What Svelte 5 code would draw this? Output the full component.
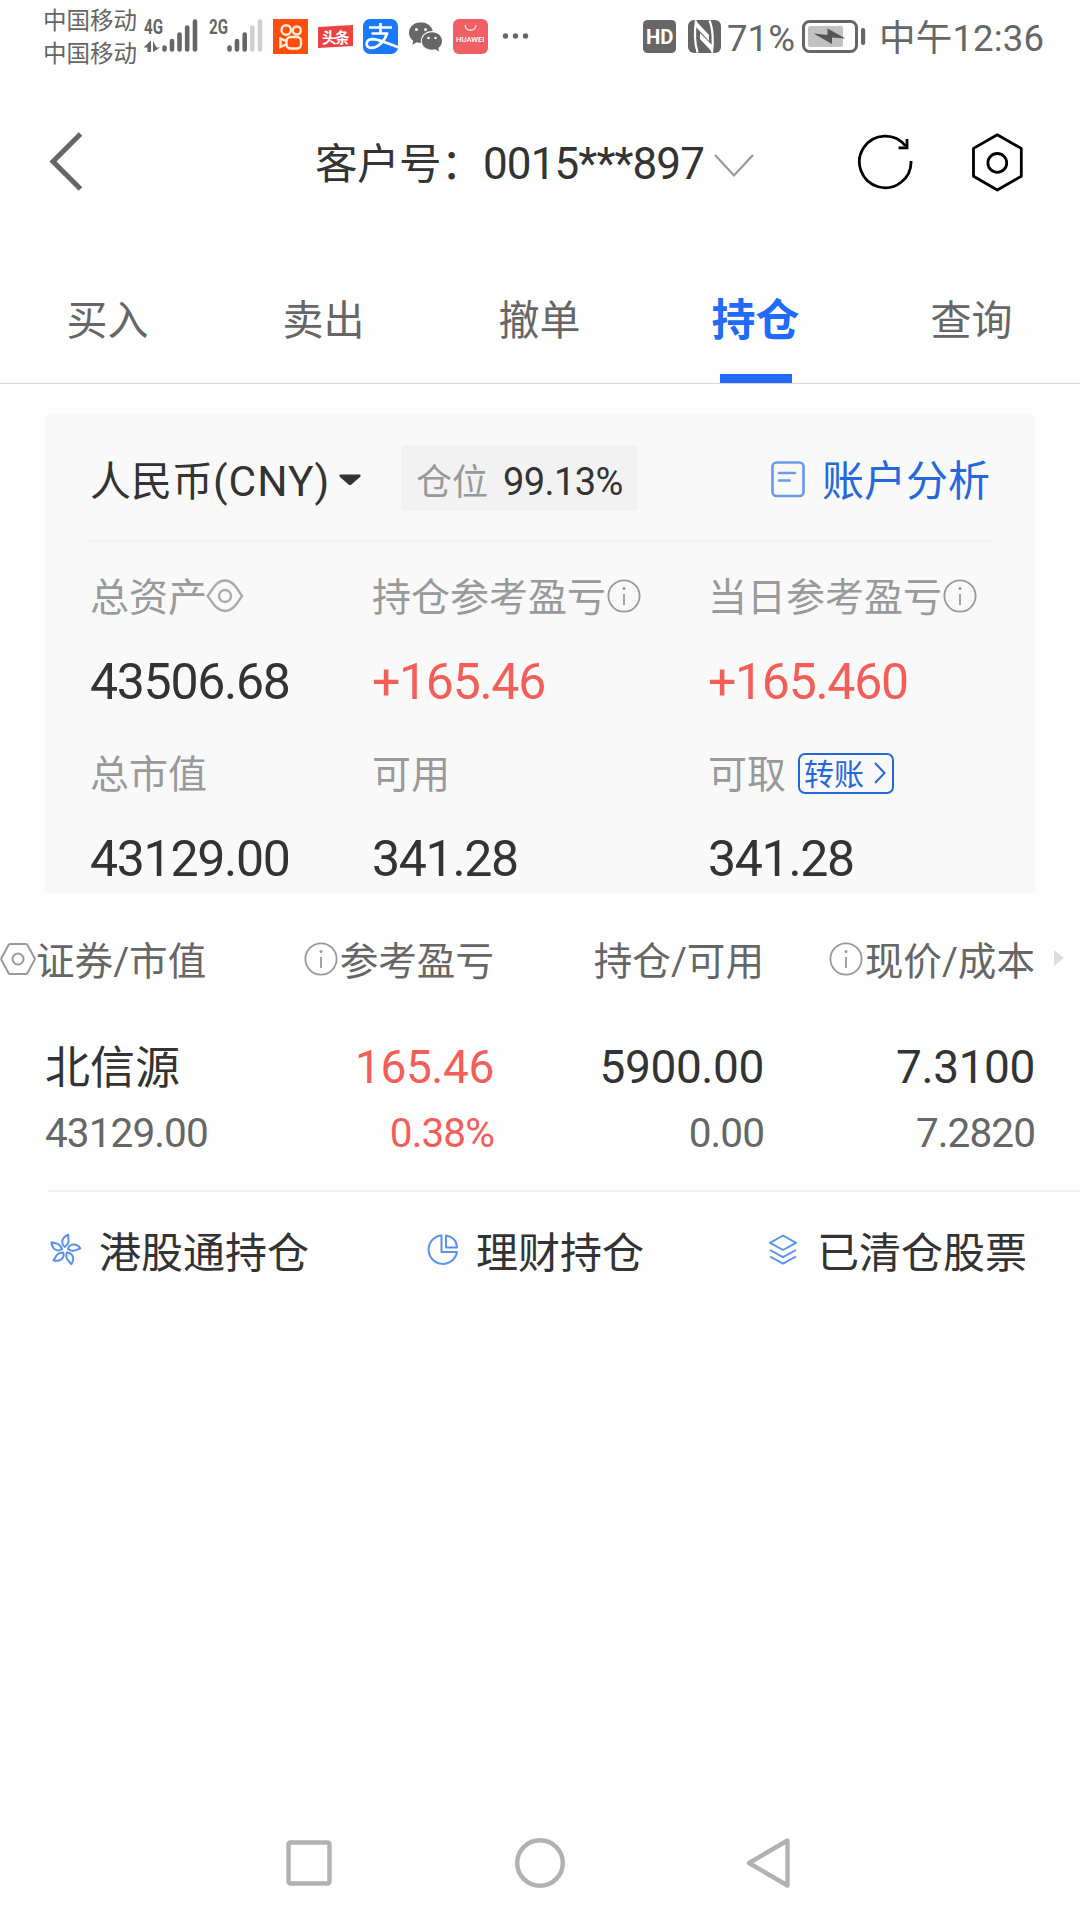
<script lang="ts">
  type Holding = {
    name: string;
    market: string;
    profit: string;
    rate: string;
    amount: string;
    usable: string;
    price: string;
    cost: string;
  };

  const tabs: string[] = ['买入', '卖出', '撤单', '持仓', '查询'];
  let active: number = $state(3);

  const holdings: Holding[] = [
    {
      name: '北信源',
      market: '43129.00',
      profit: '165.46',
      rate: '0.38%',
      amount: '5900.00',
      usable: '0.00',
      price: '7.3100',
      cost: '7.2820'
    }
  ];
</script>

{#snippet info()}
  <svg class="info" viewBox="0 0 34 34">
    <circle cx="17" cy="17" r="15.6" />
    <path d="M17 15v11" />
    <circle class="dot" cx="17" cy="9.6" r="1.5" />
  </svg>
{/snippet}

<main>
  <div class="status">
    <div class="carrier">
      <span>中国移动</span>
      <span>中国移动</span>
    </div>
    <svg class="signal" width="120" height="40" viewBox="144 16 120 40">
      <text x="144" y="34" textLength="19" lengthAdjust="spacingAndGlyphs">4G</text>
      <text x="209" y="34" textLength="19" lengthAdjust="spacingAndGlyphs">2G</text>
      <path class="fill" d="M143.500 47.500l7.500-7V52h-3.500v-4.500zM153 41v11l7-4.500h-3.500z" />
      <path class="bars" d="M164.500 47.500v2M172 41v8.500M179.500 34.500v15M187.200 27.500v22M195 21.500v28" />
      <path class="bars" d="M229.500 47.500v2M237 41v8.500M244.700 34.500v15" />
      <path class="bars off" d="M252.300 27.500v22M260 21.500v28" />
    </svg>
    <svg class="apps" width="260" height="40" viewBox="270 16 260 40">
      <rect x="273" y="19" width="35" height="35" fill="#ff4e0c" />
      <g fill="none" stroke="#ffeed6" stroke-width="2.400">
        <circle cx="286.200" cy="30" r="4.700" />
        <circle cx="296.800" cy="30.500" r="4" />
        <rect x="286.500" y="37" width="14.500" height="11.500" rx="4" />
        <path d="M286 41l-5.500-2.500v8.500l5.500-2.500" />
      </g>
      <path d="M318 27l35-2v21l-35 2z" fill="#ec4242" />
      <text class="toutiao" x="322" y="42.500" textLength="27.500">头条</text>
      <rect x="363" y="19" width="35" height="35" rx="7" fill="#1978fe" />
      <g fill="none" stroke="#fff" stroke-width="2.700">
        <path d="M380.500 23v9.500M369 27.500h23M371.500 33.500h16" />
        <path d="M387.500 32.500c-2.500 8-9 15.500-16.500 15.300c-6 0-6-8.300 1.500-8.600c6.500 0 15 4.300 25.500 8" />
      </g>
      <g fill="#666">
        <path d="M421 22.300c-6.800 0-12 4.600-12 10.400c0 3.300 1.700 6.100 4.300 8l-1 4l4.600-2.400c1.200.4 2.600.6 4 .6c-1-7.500 5-12.300 11.800-12c-1-5-6-8.600-11.700-8.600z" />
        <path d="M432 32.200c-5.800 0-10.200 4-10.200 8.800s4.400 8.800 10.200 8.800c1.200 0 2.300-.2 3.400-.5l3.800 2.100l-.9-3.400c2.400-1.700 3.700-4.200 3.700-7c0-4.800-4.200-8.800-10-8.800z" />
      </g>
      <g fill="#fff">
        <circle cx="416.500" cy="29.500" r="1.500" /><circle cx="425.500" cy="29.500" r="1.500" />
        <circle cx="428.500" cy="38" r="1.300" /><circle cx="435.500" cy="38" r="1.300" />
      </g>
      <rect x="453" y="19" width="35" height="35" rx="6" fill="#f05f63" />
      <path d="M465 25c.8 7 10.200 7 11 0" fill="none" stroke="#ffe3df" stroke-width="1.300" />
      <text class="huawei" x="456" y="41.500" textLength="28.500" lengthAdjust="spacingAndGlyphs">HUAWEI</text>
      <g fill="#666">
        <circle cx="505.500" cy="36" r="2.700" />
        <circle cx="515.500" cy="36" r="2.700" />
        <circle cx="525.500" cy="36" r="2.700" />
      </g>
    </svg>
    <svg class="badges" width="80" height="34" viewBox="643 20 80 34">
      <rect x="643" y="20" width="33" height="33" rx="4.500" fill="#666" />
      <text class="hd" x="646" y="43.500" textLength="27.500" lengthAdjust="spacingAndGlyphs">HD</text>
      <rect x="688" y="20" width="33" height="33" rx="6" fill="#666" />
      <g fill="none" stroke="#fff" stroke-width="2.200">
        <path d="M696 20.500c-1.500 10-1.500 22 1.500 32" />
        <path d="M709.500 20.500c3.500 8 4 22 2.500 32" />
      </g>
      <path d="M695 20l14 15v6L696 27zM713 53l-13-14v-6l13 13z" fill="#fff" />
    </svg>
    <span class="percent">71%</span>
    <svg class="battery" width="64" height="34" viewBox="802 20 64 34">
      <rect x="803.500" y="21.500" width="53" height="30" rx="6" fill="none" stroke="#666" stroke-width="3" />
      <rect x="808" y="26" width="35" height="21" rx="2.500" fill="#c2c2c2" />
      <path d="M813.500 33.500l14 1.500v-6.500l18 10l-13.500-1v6.500z" fill="#555" />
      <rect x="861" y="28" width="4.200" height="17" rx="2" fill="#666" />
    </svg>
    <span class="clock">中午12:36</span>
  </div>

  <header>
    <svg class="back" width="36" height="62" viewBox="0 0 36 62">
      <path d="M32.500 4L5 31.500L32.500 59" />
    </svg>
    <h1>客户号：<span>0015***897</span></h1>
    <svg class="down" width="42" height="26" viewBox="0 0 42 26">
      <path d="M2 2L21 22.500L40 2" />
    </svg>
    <svg class="tool" width="60" height="60" viewBox="855 132 60 60">
      <path d="M911 161a25.800 25.800 0 1 1-5.500-15" />
      <path d="M907 139v8.800h-8.500" />
    </svg>
    <svg class="tool hexagon" width="60" height="60" viewBox="967 132 60 60">
      <path d="M997.300 134.700L1021.300 148.400V176.200L997.300 190L973.500 176.200V148.400z" />
      <circle cx="997.300" cy="162.900" r="9.400" />
    </svg>
  </header>

  <nav>
    {#each tabs as tab, i}
      <button class={i == active ? 'selected' : ''} onclick={() => (active = i)}>{tab}</button>
    {/each}
  </nav>

  <section class="card">
    <div class="account">
      <span class="currency">人民币<span>(CNY)</span></span>
      <svg class="caret" width="24" height="12" viewBox="0 0 24 12">
        <path d="M2 0.500h20q1.500 1 0 2.500l-8.500 7.500q-1.500 1-3 0L2 3q-1.500-1.500 0-2.500z" />
      </svg>
      <span class="position">仓位<b>99.13%</b></span>
      <span class="analysis">
        <svg width="34" height="38" viewBox="0 0 34 38">
          <rect x="1.500" y="2.500" width="31" height="33.500" rx="4" />
          <path d="M8 13h16M8 20.500h10.500" />
        </svg>
        账户分析
      </span>
    </div>

    <div class="totals">
      <div>
        <label for="asset">总资产<svg class="eye" width="38" height="34" viewBox="0 0 38 34">
          <path d="M1.500 17C5 13.500 9.500 1.500 19 1.500S33 13.500 36 17C33 20.500 28.500 32 19 32S5 20.500 1.500 17z" />
          <circle cx="19" cy="17" r="6" />
        </svg></label>
        <output id="asset">43506.68</output>
      </div>
      <div>
        <label for="profit">持仓参考盈亏{@render info()}</label>
        <output id="profit" class="red">+165.46</output>
      </div>
      <div>
        <label for="today">当日参考盈亏{@render info()}</label>
        <output id="today" class="red">+165.460</output>
      </div>
      <div>
        <label for="market">总市值</label>
        <output id="market">43129.00</output>
      </div>
      <div>
        <label for="usable">可用</label>
        <output id="usable">341.28</output>
      </div>
      <div>
        <label for="cash">可取<span class="transfer">转账<svg width="14" height="24" viewBox="0 0 14 24">
          <path d="M2 2l9.500 10L2 22" />
        </svg></span></label>
        <output id="cash">341.28</output>
      </div>
    </div>
  </section>

  <section class="holdings">
    <div class="row head">
      <span class="first"><svg class="nut" width="36" height="34" viewBox="0 0 36 34">
        <path d="M10 2h16q1 0 1.500 1l7 13q.5 1 0 2l-7 13q-.5 1-1.500 1H10q-1 0-1.500-1l-7-13q-.5-1 0-2l7-13q.5-1 1.500-1z" />
        <circle cx="18" cy="17" r="5.500" />
      </svg>证券/市值</span>
      <span>{@render info()}参考盈亏</span>
      <span>持仓/可用</span>
      <span>{@render info()}现价/成本</span>
      <svg class="more" width="10" height="18" viewBox="0 0 10 18"><path d="M0 1l10 8L0 17z" /></svg>
    </div>
    {#each holdings as h}
      <div class="row main">
        <span class="name">{h.name}</span>
        <span class="red">{h.profit}</span>
        <span>{h.amount}</span>
        <span>{h.price}</span>
      </div>
      <div class="row sub">
        <span>{h.market}</span>
        <span class="red">{h.rate}</span>
        <span>{h.usable}</span>
        <span>{h.cost}</span>
      </div>
    {/each}
  </section>

  <section class="links">
    <a href="#hk">
      <svg width="34" height="34" viewBox="-17 -17 34 34">
        {#each [0, 72, 144, 216, 288] as angle}
          <g transform="rotate({angle + 8})">
            <path d="M-.5 -3C-5.500 -6 -5 -12 1 -15.500C1.500 -11.500 4.500 -8 -.5 -3z" />
          </g>
        {/each}
      </svg>
      港股通持仓
    </a>
    <a href="#wealth">
      <svg width="34" height="34" viewBox="0 0 34 34">
        <path d="M14.500 2.500A14.300 14.300 0 1 0 31 19H15.500V2.500zM20 2.500V14.500H31C31 8 26.500 3.500 20 2.500z" />
      </svg>
      理财持仓
    </a>
    <a href="#cleared">
      <svg width="34" height="34" viewBox="0 0 34 34">
        <path d="M17 2.500L30 9.800L17 17L4 9.800zM4 17l13 7.200L30 17M4 23.500l13 7.200l13-7.200" />
      </svg>
      已清仓股票
    </a>
  </section>

  <footer>
    <svg width="56" height="56" viewBox="0 0 56 56"><rect x="7.500" y="7.500" width="41" height="41" rx="2" /></svg>
    <svg width="56" height="56" viewBox="0 0 56 56"><circle cx="29" cy="28" r="22.800" /></svg>
    <svg width="56" height="56" viewBox="0 0 56 56"><path d="M46.500 5.500V50.500L8 28z" /></svg>
  </footer>
</main>

<style>
  :global(body) {
    background: #fefefe;
  }

  main {
    width: 1080px;
    height: 1920px;
    display: flex; flex-direction: column;
    overflow: hidden;
    font-family: Roboto, "Noto Sans CJK SC", sans-serif;
    color: #333;
  }

  svg {
    display: block;
    flex: none;
    fill: none;
  }

  .red { color: #f35e58 !important; }

  .status {
    height: 75px;
    box-sizing: border-box;
    padding: 4px 0 0 43px;
    display: flex; align-items: flex-start;
    color: #666;
    white-space: nowrap;
  }

  .carrier {
    width: 101px;
    margin-top: 1px;
    display: flex; flex-direction: column;
    font-size: 23.500px;
    line-height: 33px;
  }

  .signal, .apps { margin-top: 12px; }
  .signal text { font-size: 21px; font-weight: 700; fill: #666; }
  .signal .fill { fill: #666; }
  .bars { stroke: #666; stroke-width: 4.6; stroke-linecap: round; }
  .off { stroke: #d0d0d0; }

  .apps { margin-left: 6px; }
  .toutiao { font-size: 14.500px; font-weight: 700; fill: #fff; }
  .huawei { font-size: 7px; font-weight: 500; fill: #fff; }
  .hd { font-size: 20px; font-weight: 700; fill: #fff; }

  .badges { margin: 16px 0 0 113px; }

  .percent {
    width: 74px;
    margin: 12px 0 0 4px;
    font-size: 36.500px;
    line-height: 46px;
    letter-spacing: 0.1px;
  }

  .battery { margin: 16px 0 0 1px; }

  .clock {
    margin: 12px 0 0 13px;
    font-size: 36.500px;
    line-height: 46px;
    letter-spacing: 0.2px;
  }

  header {
    height: 174px;
    display: flex; align-items: center;
    white-space: nowrap;
  }

  .back { margin: -3px 0 0 48px; }
  .back path { stroke: #666; stroke-width: 5; }

  h1 {
    width: 398px;
    margin: 4px 0 0 231px;
    font-size: 42.500px;
    font-weight: 400;
    line-height: 60px;
    letter-spacing: -0.5px;
  }

  h1 span { font-size: 44px; letter-spacing: -0.9px; }

  .down { margin: 7px 0 0 0; }
  .down path { stroke: #999; stroke-width: 2.2; }

  .tool {
    margin-left: 100px;
    stroke: #000; stroke-width: 2.8;
  }

  .hexagon { margin-left: 52px; stroke-linejoin: round; }

  nav {
    height: 134px;
    display: grid; grid-template-columns: repeat(5, 1fr);
    border-bottom: 1px solid #d8d8d8;
  }

  nav button {
    border: none;
    background: none;
    padding: 2px 1px 0 0;
    font-family: inherit;
    font-size: 41px;
    color: #666;
  }

  nav .selected {
    background: linear-gradient(#226afc, #226afc) bottom / 72px 9px no-repeat;
    font-size: 44px;
    font-weight: 700;
    color: #226afc;
  }

  .card {
    height: 479px;
    margin: 30px 45px 0;
    padding: 0 45px;
    box-sizing: border-box;
    background: #f9f9f9;
  }

  .account {
    height: 128px;
    padding-top: 6px;
    box-sizing: border-box;
    display: flex; align-items: center;
    border-bottom: 2px solid #f2f2f2;
    white-space: nowrap;
  }

  .currency {
    width: 248px;
    padding-top: 3px;
    font-size: 41px;
    line-height: 60px;
  }

  .currency span { font-size: 42.500px; letter-spacing: 1px; }

  .caret path { fill: #333; }

  .position {
    width: 237px;
    height: 66px;
    margin: -4px 0 0 39px;
    padding-left: 15px;
    box-sizing: border-box;
    background: #f2f2f2;
    border-radius: 4px;
    font-size: 36px;
    line-height: 74px;
    color: #999;
  }

  .position b {
    margin-left: 15px;
    font-size: 38px;
    font-weight: 400;
    letter-spacing: -0.6px;
    color: #333;
  }

  .analysis {
    margin-left: auto;
    padding-top: 3px;
    display: flex; align-items: center; gap: 17px;
    font-size: 42px;
    line-height: 60px;
    color: #2668dc;
  }

  .analysis svg { margin-top: -6px; stroke: #6c9be8; stroke-width: 2.7; stroke-linecap: round; }

  .totals {
    padding-top: 1px;
    display: grid; grid-template-columns: 282px 336px 1fr;
    grid-auto-rows: 177px;
    white-space: nowrap;
  }

  .totals label {
    height: 60px;
    margin-top: 25px;
    display: flex; align-items: center;
    font-size: 39px;
    line-height: 60px;
    color: #999;
  }

  .totals label svg { margin-top: -4px; }

  .totals output {
    display: block;
    margin-top: 24px;
    font-size: 50px;
    line-height: 60px;
    letter-spacing: -1.300px;
  }

  .eye { margin-left: -1px; stroke: #aaa; stroke-width: 2.4; }

  .info {
    width: 34px;
    height: 34px;
    margin-left: 1px;
    stroke: #999; stroke-width: 1.8;
  }

  .info .dot { fill: #999; stroke: none; }

  .transfer {
    height: 41px;
    width: 96px;
    box-sizing: border-box;
    margin: -4px 0 0 12px;
    padding: 3px 0 0 4px;
    display: flex; align-items: center; gap: 9px;
    border: 2px solid #2668dc;
    border-radius: 7px;
    font-size: 30px;
    line-height: 36px;
    color: #2668dc;
  }

  .transfer svg { stroke: #2668dc; stroke-width: 2; }

  .holdings {
    height: 297px;
    padding: 35px 0 0 45px;
    box-sizing: border-box;
  }

  .row {
    display: grid; grid-template-columns: 180px 269px 270px 271px 1fr;
    align-items: center;
    text-align: right;
    white-space: nowrap;
  }

  .row span:first-child { text-align: left; }

  .head {
    height: 60px;
    font-size: 38.600px;
    color: #666;
  }

  .head span {
    display: flex; align-items: center; justify-content: flex-end;
  }

  .head .first { justify-content: flex-start; margin-left: -45px; }
  .head .info, .nut { margin-top: 2px; }
  .head .info { margin-right: 2px; }
  .nut { stroke: #999; stroke-width: 2; }
  .more { margin-left: 19px; }
  .more path { fill: #ddd; }

  .main {
    height: 60px;
    margin-top: 48px;
    font-size: 46px;
    letter-spacing: -0.4px;
  }

  .main .name { margin-top: -4px; font-size: 45px; letter-spacing: 0; }

  .sub {
    height: 60px;
    margin-top: 7px;
    font-size: 40.500px;
    letter-spacing: -0.9px;
    color: #666;
  }

  .links {
    height: 126px;
    margin-left: 48px;
    padding-right: 54px;
    box-sizing: border-box;
    display: flex; align-items: center;
    border-top: 2px solid #f2f2f2;
  }

  .links a {
    display: flex; align-items: center; gap: 17px;
    font-size: 42px;
    line-height: 60px;
    color: #333;
    text-decoration: none;
    white-space: nowrap;
  }

  .links a:nth-child(2) { margin-left: 117px; gap: 16px; }
  .links a:nth-child(3) { margin-left: 122px; }

  .links svg { margin-top: -8px; stroke: #5b93ec; stroke-width: 2; stroke-linejoin: round; }

  footer {
    margin-top: auto;
    height: 114px;
    padding: 0 283px 0 281px;
    display: flex; align-items: center; justify-content: space-between;
  }

  footer svg { stroke: #b1b1b1; stroke-width: 4.4; stroke-linejoin: round; }
</style>
